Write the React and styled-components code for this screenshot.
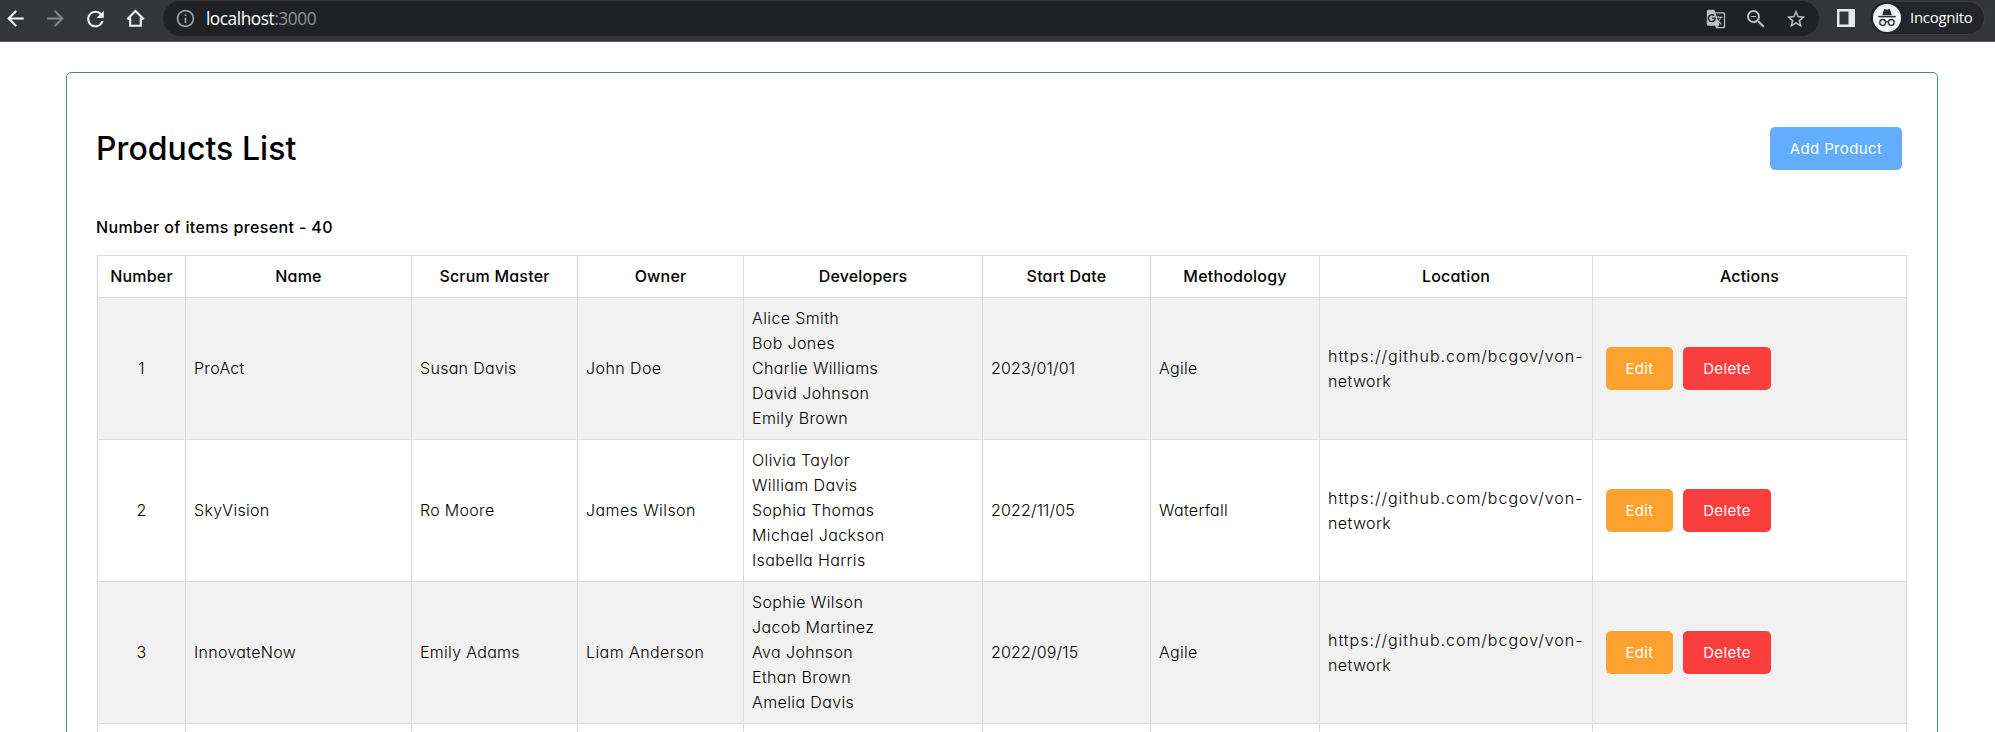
import React from "react";
import styled, { createGlobalStyle } from "styled-components";
import {
  MdArrowBack,
  MdArrowForward,
  MdRefresh,
  MdInfoOutline,
  MdGTranslate,
  MdZoomOut,
  MdStarBorder,
} from "react-icons/md";

const GlobalStyle = createGlobalStyle`
  * { box-sizing: border-box; }
  html, body { margin: 0; height: 732px; overflow: hidden; background: #fff; }
  body {
    font-family: Inter, "Liberation Sans", sans-serif;
    font-feature-settings: "cv11";
    color: #000;
  }
`;

const Page = styled.div`
  height: 732px;
  overflow: hidden;
`;

const BrowserBar = styled.header`
  display: flex;
  align-items: flex-start;
  height: 42px;
  padding: 1px 10px 0 0;
  background: #35363a;
  border-bottom: 1px solid #5b5c60;
  font-family: "Open Sans", "Noto Sans", sans-serif;
`;

const NavButtons = styled.nav`
  display: flex;
  width: 163px;
  height: 35px;
  padding-left: 3px;
  gap: 15px;
  align-items: center;
  color: #f1f3f4;
`;

const NavIcon = styled.span`
  display: flex;
  width: 25px;
  justify-content: center;
  color: ${(p) => (p.$muted ? "#85868a" : "inherit")};
`;

const AddressBar = styled.div`
  display: flex;
  align-items: center;
  width: 1657px;
  height: 35px;
  padding: 0 12px;
  border-radius: 18px;
  background: #202124;
  color: #bdc1c6;
`;

const Url = styled.span`
  flex: 1;
  margin-left: 10px;
  font-size: 17.3px;
  letter-spacing: -0.45px;
  line-height: 34px;
  color: #8f9296;
`;

const Host = styled.span`
  color: #fff;
`;

const AddressIcons = styled.div`
  display: flex;
  gap: 17.5px;
  align-items: center;
`;

const PanelIcon = styled.svg`
  margin: 8px 0 0 18px;
`;

const Profile = styled.div`
  display: flex;
  align-items: center;
  width: 116px;
  height: 34px;
  margin-left: 14px;
  padding-left: 3px;
  gap: 9px;
  border: 1px solid #3c3d41;
  border-radius: 17px;
  background: #242528;
  color: #fff;
  font-size: 15px;
  line-height: 30px;
  letter-spacing: -0.3px;
`;

const ProfileName = styled.span`
  padding-bottom: 2px;
`;

const Card = styled.main`
  width: 1872px;
  height: 900px;
  margin: 30px 0 0 66px;
  padding: 0 30px;
  border: 1px solid steelblue;
  border-radius: 5px;
`;

const CardHeader = styled.div`
  display: flex;
  justify-content: space-between;
  align-items: center;
  height: 43px;
  margin-top: 54px;
  padding-right: 5px;
`;

const Title = styled.h1`
  margin: 0 0 0 -1px;
  font-size: 32px;
  font-weight: 520;
  letter-spacing: 0.05px;
  line-height: 43px;
`;

const Count = styled.p`
  margin: 44px 0 15px -1px;
  font-size: 16px;
  font-weight: 550;
  letter-spacing: 0.37px;
  line-height: 26px;
`;

const Button = styled.button`
  width: ${(p) => p.$width}px;
  height: 43px;
  padding: 0;
  border: 0;
  border-radius: 5px;
  background: ${(p) => p.$color};
  color: #fff;
  font: 400 15px Inter, sans-serif;
  font-feature-settings: "cv11";
  letter-spacing: 0.37px;
`;

const Table = styled.table`
  width: 1810px;
  table-layout: fixed;
  border-collapse: collapse;
  font-size: 16px;
  line-height: 25px;
`;

const HeadCell = styled.th`
  height: 42px;
  padding: 0;
  border: 1px solid #dcdcdc;
  font-weight: 550;
  letter-spacing: 0.2px;
`;

const Row = styled.tr`
  background: ${(p) => (p.$shaded ? "#f1f1f1" : "#fff")};
`;

const Cell = styled.td`
  height: 142px;
  padding: 0 8px;
  border: 1px solid #dcdcdc;
  font-weight: 340;
  letter-spacing: ${(p) => p.$track ?? 0.3}px;
  text-align: ${(p) => (p.$center ? "center" : "left")};
`;

const Line = styled.div`
  white-space: nowrap;
  letter-spacing: ${(p) => p.$track ?? 0.38}px;
`;

const Actions = styled.div`
  display: flex;
  gap: 10px;
  padding-left: 5px;
`;

const columns = [
  ["Number", 88],
  ["Name", 226],
  ["Scrum Master", 166],
  ["Owner", 166],
  ["Developers", 239],
  ["Start Date", 168],
  ["Methodology", 169],
  ["Location", 273],
  ["Actions", 314],
];

const products = [
  {
    id: 1,
    name: "ProAct",
    master: "Susan Davis",
    owner: "John Doe",
    developers: ["Alice Smith", "Bob Jones", "Charlie Williams", "David Johnson", "Emily Brown"],
    start: "2023/01/01",
    method: "Agile",
  },
  {
    id: 2,
    name: "SkyVision",
    master: "Ro Moore",
    owner: "James Wilson",
    developers: ["Olivia Taylor", "William Davis", "Sophia Thomas", "Michael Jackson", "Isabella Harris"],
    start: "2022/11/05",
    method: "Waterfall",
  },
  {
    id: 3,
    name: "InnovateNow",
    master: "Emily Adams",
    owner: "Liam Anderson",
    developers: ["Sophie Wilson", "Jacob Martinez", "Ava Johnson", "Ethan Brown", "Amelia Davis"],
    start: "2022/09/15",
    method: "Agile",
  },
];

const HomeIcon = () => (
  <svg width="19" height="19" viewBox="0 0 19 19" fill="none" stroke="currentColor" strokeWidth="2.1">
    <path d="M1.2 10.2 9.5 2l8.3 8.2M4.2 8.5v8.3h10.6V8.5M1.8 10h2.4M14.8 10h2.4" />
  </svg>
);

const IncognitoIcon = () => (
  <svg width="28" height="28" viewBox="0 0 28 28">
    <circle cx="14" cy="14" r="14" fill="#f1f3f4" />
    <path d="M9.2 11.3 10.8 6q.4-1.2 1.6-.8l1.6.5 1.6-.5q1.2-.4 1.6.8l1.6 5.3z" fill="#2b2c30" />
    <path d="M5.3 12.6h17.4" stroke="#2b2c30" strokeWidth="1.5" />
    <g fill="none" stroke="#2b2c30" strokeWidth="1.3">
      <circle cx="9.7" cy="18.4" r="2.9" />
      <circle cx="18.3" cy="18.4" r="2.9" />
      <path d="M12.6 18q1.4-.9 2.8 0" />
    </g>
  </svg>
);

function Browser() {
  return (
    <BrowserBar>
      <NavButtons>
        <NavIcon><MdArrowBack size={25} /></NavIcon>
        <NavIcon $muted><MdArrowForward size={25} /></NavIcon>
        <NavIcon><MdRefresh size={26} /></NavIcon>
        <NavIcon><HomeIcon /></NavIcon>
      </NavButtons>
      <AddressBar>
        <MdInfoOutline size={21} color="#9aa0a6" />
        <Url><Host>localhost</Host>:3000</Url>
        <AddressIcons>
          <MdGTranslate size={20} />
          <MdZoomOut size={24} />
          <MdStarBorder size={22} />
        </AddressIcons>
      </AddressBar>
      <PanelIcon width="18" height="18" viewBox="0 0 18 18">
        <path fill="#e8eaed" fillRule="evenodd" d="M0 0h18v18H0zM2.5 2.5v13h9v-13z" />
      </PanelIcon>
      <Profile><IncognitoIcon /><ProfileName>Incognito</ProfileName></Profile>
    </BrowserBar>
  );
}

function ProductRow({ product }) {
  return (
    <Row $shaded={product.id % 2 === 1}>
      <Cell $center>{product.id}</Cell>
      <Cell>{product.name}</Cell>
      <Cell>{product.master}</Cell>
      <Cell $track={0.42}>{product.owner}</Cell>
      <Cell>
        {product.developers.map((d) => <Line key={d}>{d}</Line>)}
      </Cell>
      <Cell $track={0.15}>{product.start}</Cell>
      <Cell>{product.method}</Cell>
      <Cell>
        <Line $track={0.98}>https://github.com/bcgov/von-</Line>
        <Line>network</Line>
      </Cell>
      <Cell>
        <Actions>
          <Button $width={67} $color="#fda12f">Edit</Button>
          <Button $width={88} $color="#fa3e3e">Delete</Button>
        </Actions>
      </Cell>
    </Row>
  );
}

export default function App() {
  return (
    <Page>
      <GlobalStyle />
      <Browser />
      <Card>
        <CardHeader>
          <Title>Products List</Title>
          <Button $width={132} $color="#62adff">Add Product</Button>
        </CardHeader>
        <Count>Number of items present - 40</Count>
        <Table>
          <colgroup>
            {columns.map(([name, width]) => <col key={name} width={width} />)}
          </colgroup>
          <thead>
            <tr>{columns.map(([name]) => <HeadCell key={name}>{name}</HeadCell>)}</tr>
          </thead>
          <tbody>
            {products.map((p) => <ProductRow key={p.id} product={p} />)}
            <Row>{columns.map(([name]) => <Cell key={name} />)}</Row>
          </tbody>
        </Table>
      </Card>
    </Page>
  );
}
